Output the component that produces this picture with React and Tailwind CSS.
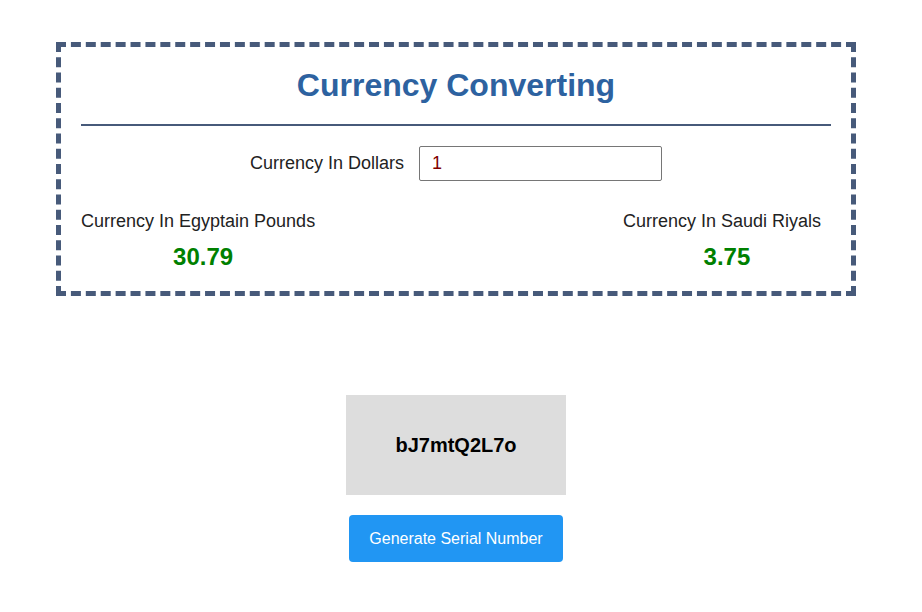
export default function App() {
  return (
    <div className="w-[912px] font-['Liberation_Sans',Arial,sans-serif] text-[#222]">
      <div className="mx-auto mt-[42px] w-[800px] border-[5px] border-dashed border-[#475a7a] px-5 pt-[16px] pb-[20px]">
        <h1 className="text-center text-[32px] font-bold leading-[44px] text-[#2d62a0]">
          Currency Converting
        </h1>
        <hr className="mt-[17px] border-t-2 border-[#475a7a]" />
        <div className="mt-[20px] flex items-center justify-center gap-[15px]">
          <label className="text-[18px]">Currency In Dollars</label>
          <input
            type="text"
            defaultValue="1"
            className="h-[35px] w-[243px] rounded-[2px] border border-[#767676] px-3 text-[18px] text-[#800000] outline-none"
          />
        </div>
        <div className="mt-[29px] flex justify-between">
          <div className="flex flex-col items-center">
            <span className="text-[18px] leading-[22px]">Currency In Egyptain Pounds</span>
            <span className="mt-[11px] pl-[10px] text-[24px] font-bold leading-[28px] text-[#008000]">30.79</span>
          </div>
          <div className="mr-[10px] flex flex-col items-center">
            <span className="text-[18px] leading-[22px]">Currency In Saudi Riyals</span>
            <span className="mt-[11px] pl-[10px] text-[24px] font-bold leading-[28px] text-[#008000]">3.75</span>
          </div>
        </div>
      </div>
      <div className="mt-[99px] flex flex-col items-center">
        <div className="flex h-[100px] w-[220px] items-center justify-center bg-[#dddddd] text-[20px] font-bold text-black">
          bJ7mtQ2L7o
        </div>
        <button className="mt-[20px] h-[47px] w-[214px] rounded-[4px] bg-[#2196f3] text-base text-white">
          Generate Serial Number
        </button>
      </div>
    </div>
  );
}
